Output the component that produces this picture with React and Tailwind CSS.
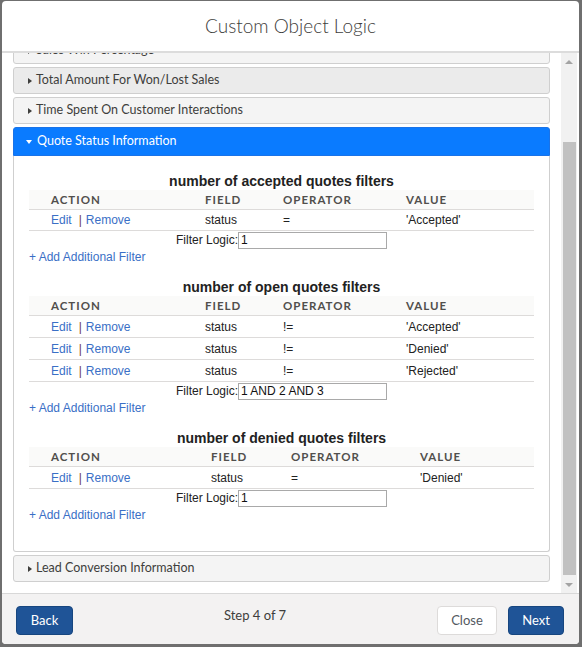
import React from 'react';

const LATO = "font-['Lato','Noto_Sans',sans-serif]";
const ARIAL = "font-['Liberation_Sans','Arial',sans-serif]";

const filterBlocks = [
  {
    title: 'number of accepted quotes filters',
    grid: 'grid grid-cols-[176px_78px_123px_1fr]',
    rowH: 'h-[21px]',
    rows: [['status', '=', "'Accepted'"]],
    logic: '1',
  },
  {
    title: 'number of open quotes filters',
    grid: 'grid grid-cols-[176px_78px_123px_1fr]',
    rowH: 'h-[22px]',
    rows: [
      ['status', '!=', "'Accepted'"],
      ['status', '!=', "'Denied'"],
      ['status', '!=', "'Rejected'"],
    ],
    logic: '1 AND 2 AND 3',
  },
  {
    title: 'number of denied quotes filters',
    grid: 'grid grid-cols-[182px_80px_129px_1fr]',
    rowH: 'h-[22px]',
    rows: [['status', '=', "'Denied'"]],
    logic: '1',
  },
];

function RightCaret() {
  return (
    <span className="flex w-[7px] justify-end">
      <span className="h-0 w-0 border-y-[3.5px] border-l-[4px] border-y-transparent border-l-[#3e3e3c]" />
    </span>
  );
}

function Section({ label, hover }) {
  return (
    <div
      className={`flex h-[27px] shrink-0 items-center gap-[4px] rounded-[3px] border border-[#cfcfcf] pl-[11px] text-[12.5px] text-[#3e3e3c] ${LATO} ${
        hover ? 'bg-[#ebebeb]' : 'bg-[#f4f4f4]'
      }`}
    >
      <RightCaret />
      <span>{label}</span>
    </div>
  );
}

function FilterBlock({ block, first }) {
  return (
    <div className={first ? '' : 'mt-[13px]'}>
      <div className={`h-[18px] text-center text-[14px] font-bold leading-[18px] text-[#222] ${ARIAL}`}>
        {block.title}
      </div>
      <div
        className={`${block.grid} h-[20px] items-center border-b border-[#dddbda] bg-[#fafaf9] text-[11.5px] font-bold uppercase tracking-[1px] text-[#514f4d] ${LATO}`}
      >
        <span className="pl-[22px]">Action</span>
        <span>Field</span>
        <span>Operator</span>
        <span>Value</span>
      </div>
      {block.rows.map((r, i) => (
        <div
          key={i}
          className={`${block.grid} ${block.rowH} items-center border-b border-[#dddbda] text-[12px] text-[#222] ${ARIAL}`}
        >
          <span className="flex pl-[22px]">
            <span className="text-[#3a6fc6]">Edit</span>
            <span className="ml-[7px] text-[#6b3a4c]">|</span>
            <span className="ml-[4px] text-[#3a6fc6]">Remove</span>
          </span>
          <span>{r[0]}</span>
          <span>{r[1]}</span>
          <span>{r[2]}</span>
        </div>
      ))}
      <div className={`flex h-[18px] items-center justify-center text-[12px] text-[#222] ${ARIAL}`}>
        <span>Filter Logic:</span>
        <input
          readOnly
          defaultValue={block.logic}
          className="h-[17px] w-[149px] border border-[#a9a9a9] bg-white px-[2px] text-[12px] leading-none text-[#111] outline-none"
        />
      </div>
      <div className={`h-[16px] text-[12px] leading-[16px] text-[#3a6fc6] ${ARIAL}`}>+ Add Additional Filter</div>
    </div>
  );
}

function Scrollbar() {
  return (
    <div className="flex w-[16px] shrink-0 flex-col bg-[#f1f1f1]">
      <div className="flex h-[17px] items-center justify-center">
        <span className="h-0 w-0 border-x-[4px] border-b-[4px] border-x-transparent border-b-[#a3a3a3]" />
      </div>
      <div className="flex flex-1 flex-col pb-[1px] pt-[72px]">
        <div className="ml-[2px] w-[13px] flex-1 bg-[#c1c1c1]" />
      </div>
      <div className="flex h-[17px] items-center justify-center">
        <span className="h-0 w-0 border-x-[4px] border-t-[4px] border-x-transparent border-t-[#a3a3a3]" />
      </div>
    </div>
  );
}

export default function App() {
  return (
    <div className="h-[647px] w-[582px] bg-[#6f6f6f] pb-[3px] pl-[2px] pr-[3px] pt-[1px]">
      <div className="flex h-full flex-col overflow-hidden rounded-[4px] bg-white">
        {/* header */}
        <div
          className={`flex h-[52px] shrink-0 items-center justify-center border-b-2 border-[#dcdcdc] text-[19px] font-light text-[#3e3e3c] ${LATO}`}
        >
          Custom Object Logic
        </div>

        {/* body */}
        <div className="flex min-h-0 flex-1 pr-[2px]">
          <div className="flex min-h-0 flex-1 flex-col justify-end overflow-hidden px-[11px]">
            <div className="flex shrink-0 flex-col gap-[3px] pb-[11px] pt-[8px]">
              <Section label="Sales Win Percentage" />
              <Section label="Total Amount For Won/Lost Sales" hover />
              <Section label="Time Spent On Customer Interactions" />
              <div className="flex shrink-0 flex-col">
                <div
                  className={`flex h-[29px] items-center gap-[5px] rounded-t-[3px] border border-[#1a73e8] bg-[#0a7bff] pl-[11px] text-[12.5px] text-white ${LATO}`}
                >
                  <span className="flex w-[7px] justify-end">
                    <span className="h-0 w-0 border-x-[3.5px] border-t-[4px] border-x-transparent border-t-white" />
                  </span>
                  <span>Quote Status Information</span>
                </div>
                <div className="rounded-b-[3px] border-x border-b border-[#cfcfcf] px-[15px] pb-[28px] pt-[16px]">
                  {filterBlocks.map((b, i) => (
                    <FilterBlock key={b.title} block={b} first={i === 0} />
                  ))}
                </div>
              </div>
              <Section label="Lead Conversion Information" />
            </div>
          </div>
          <Scrollbar />
        </div>

        {/* footer */}
        <div
          className={`flex h-[51px] shrink-0 items-start justify-between border-t border-[#d8d8d8] bg-[#f3f2f2] pl-[14px] pr-[15px] pt-[12px] ${LATO}`}
        >
          <button className="h-[29px] w-[57px] rounded-[4px] border border-[#17467f] bg-[#1f5497] text-[13px] text-white">
            Back
          </button>
          <span className="text-[13px] leading-[18px] text-[#3e3e3c]">Step 4 of 7</span>
          <div className="flex gap-[11px]">
            <button className="h-[29px] w-[60px] rounded-[4px] border border-[#dddbda] bg-white text-[13px] text-[#54595f]">
              Close
            </button>
            <button className="h-[29px] w-[56px] rounded-[4px] border border-[#17467f] bg-[#1f5497] text-[13px] text-white">
              Next
            </button>
          </div>
        </div>
      </div>
    </div>
  );
}
